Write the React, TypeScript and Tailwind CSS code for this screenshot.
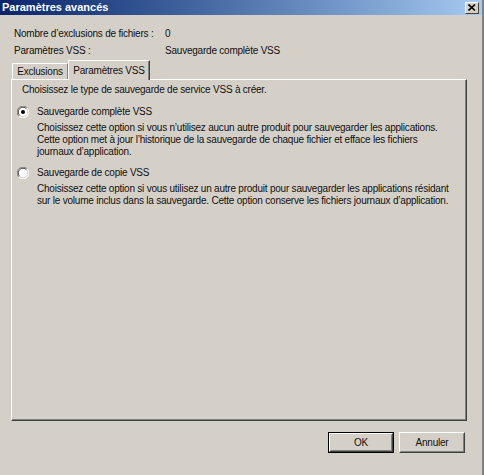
import React from "react"

const font = "font-['Liberation_Sans',Arial,sans-serif]"

function Radio({ checked }: { checked?: boolean }) {
  return (
    <svg width="12" height="12" viewBox="0 0 12 12" className="shrink-0">
      <circle cx="6" cy="6" r="5.5" fill="#ffffff" />
      <path d="M10.2 1.8 A5.5 5.5 0 0 0 1.8 10.2" fill="none" stroke="#808080" strokeWidth="1" />
      <path d="M9.4 2.6 A4.4 4.4 0 0 0 2.6 9.4" fill="none" stroke="#404040" strokeWidth="1" />
      <path d="M1.8 10.2 A5.5 5.5 0 0 0 10.2 1.8" fill="none" stroke="#ffffff" strokeWidth="1" />
      <path d="M2.6 9.4 A4.4 4.4 0 0 0 9.4 2.6" fill="none" stroke="#d4d0c8" strokeWidth="1" />
      {checked && <circle cx="6" cy="6" r="2" fill="#000000" />}
    </svg>
  )
}

function Option({ checked, label, lines }: { checked?: boolean; label: string; lines: string[] }) {
  return (
    <div className="-ml-[5px]">
      <div className="flex items-center h-[12px]">
        <Radio checked={checked} />
        <span className="ml-[8px] leading-[12px]">{label}</span>
      </div>
      <div className="mt-[4px] pl-[20px]">
        {lines.map((l) => (
          <div key={l} className="leading-[12px] whitespace-nowrap">
            {l}
          </div>
        ))}
      </div>
    </div>
  )
}

function Button({ label, isDefault }: { label: string; isDefault?: boolean }) {
  return (
    <div className={`w-[66px] h-[21px] ${isDefault ? "border border-black" : ""}`}>
      <div className="w-full h-full border border-t-white border-l-white border-b-[#404040] border-r-[#404040]">
        <div className="w-full h-full flex items-center justify-center border border-t-[#d4d0c8] border-l-[#d4d0c8] border-b-[#808080] border-r-[#808080]">
          {label}
        </div>
      </div>
    </div>
  )
}

export default function App() {
  return (
    <div
      className={`w-[484px] h-[475px] bg-[#d4d0c8] border-r-2 border-r-[#808080] flex flex-col text-[10px] tracking-[-0.22px] text-[#111] ${font}`}
    >
      {/* Title bar */}
      <div className="h-[15px] bg-gradient-to-r from-[#0a246a] to-[#a6caf0] flex items-center justify-between pl-[2px] pr-[3px]">
        <span className="text-white font-bold text-[11px] tracking-normal leading-none">Paramètres avancés</span>
        <div className="w-[14px] h-[12px] bg-[#d4d0c8] border border-t-white border-l-white border-b-[#404040] border-r-[#404040] flex items-center justify-center">
          <svg width="8" height="7" viewBox="0 0 8 7">
            <path d="M0.5 0.5 L7 6.5 M7 0.5 L0.5 6.5" stroke="#000" strokeWidth="1.6" />
          </svg>
        </div>
      </div>

      {/* Info rows */}
      <div className="mt-[12px] pl-[14px] grid grid-cols-[151px_1fr] gap-y-[4px] leading-[13px]">
        <div>Nombre d’exclusions de fichiers :</div>
        <div>0</div>
        <div>Paramètres VSS :</div>
        <div>Sauvegarde complète VSS</div>
      </div>

      {/* Tabs */}
      <div className="mt-[3px] ml-[11px] h-[19px] flex items-end">
        <div className="ml-[1px] w-[56px] h-[16px] border-t border-l border-t-white border-l-white border-r border-r-[#808080] flex items-center justify-center">
          Exclusions
        </div>
        <div className="relative z-10 -mb-px w-[82px] h-[20px] bg-[#d4d0c8] border-t border-l border-t-white border-l-white border-r border-r-[#404040] shadow-[inset_-1px_0_0_#808080] flex items-center justify-center pb-[1px]">
          Paramètres VSS
        </div>
      </div>

      {/* Panel */}
      <div className="ml-[11px] w-[456px] h-[342px] border border-t-white border-l-white border-b-[#404040] border-r-[#404040] shadow-[inset_-1px_-1px_0_#808080]">
        <div className="pt-[4px] pl-[10px]">
          <div className="leading-[12px]">Choisissez le type de sauvegarde de service VSS à créer.</div>
          <div className="mt-[10px]">
            <Option
              checked
              label="Sauvegarde complète VSS"
              lines={[
                "Choisissez cette option si vous n’utilisez aucun autre produit pour sauvegarder les applications.",
                "Cette option met à jour l’historique de la sauvegarde de chaque fichier et efface les fichiers",
                "journaux d’application.",
              ]}
            />
          </div>
          <div className="mt-[9px]">
            <Option
              label="Sauvegarde de copie VSS"
              lines={[
                "Choisissez cette option si vous utilisez un autre produit pour sauvegarder les applications résidant",
                "sur le volume inclus dans la sauvegarde. Cette option conserve les fichiers journaux d’application.",
              ]}
            />
          </div>
        </div>
      </div>

      {/* Buttons */}
      <div className="mt-[11px] flex justify-end gap-[5px] pr-[17px]">
        <Button label="OK" isDefault />
        <Button label="Annuler" />
      </div>
    </div>
  )
}
